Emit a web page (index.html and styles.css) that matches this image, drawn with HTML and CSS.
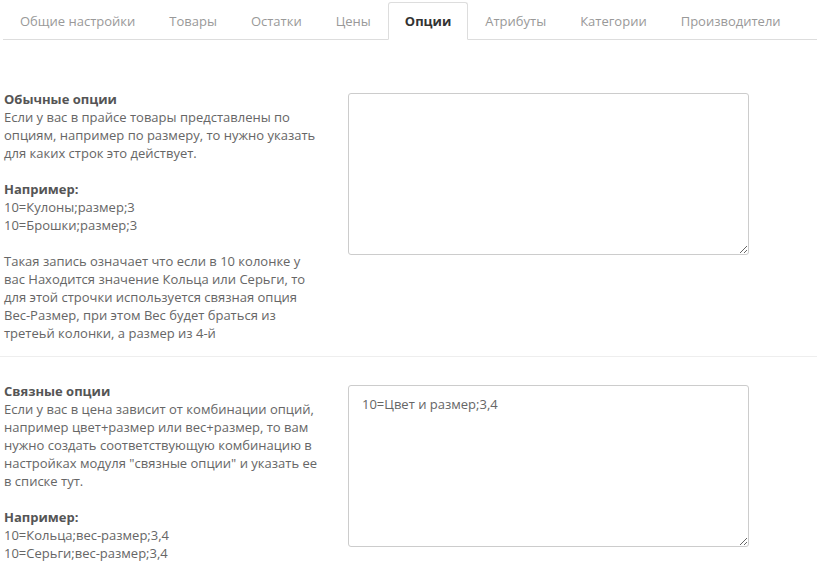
FILE: index.html
```html
<!DOCTYPE html>
<html lang="ru">
<head>
    <meta charset="UTF-8">
    <title>Опции</title>
    <link rel="stylesheet" href="styles.css">
</head>
<body>
    <div class="page">
        <ul class="nav-tabs">
            <li><a href="#">Общие настройки</a></li>
            <li><a href="#">Товары</a></li>
            <li><a href="#">Остатки</a></li>
            <li><a href="#">Цены</a></li>
            <li class="active"><a href="#">Опции</a></li>
            <li><a href="#">Атрибуты</a></li>
            <li><a href="#">Категории</a></li>
            <li><a href="#">Производители</a></li>
        </ul>

        <div class="tab-content">
            <div class="form-group">
                <div class="help">
                    <b>Обычные опции</b><br>
                    Если у вас в прайсе товары представлены по опциям, например по размеру, то нужно указать для каких строк это действует.<br>
                    <br>
                    <b>Например:</b><br>
                    10=Кулоны;размер;3<br>
                    10=Брошки;размер;3<br>
                    <br>
                    Такая запись означает что если в 10 колонке у вас Находится значение Кольца или Серьги, то для этой строчки используется связная опция Вес-Размер, при этом Вес будет браться из третеьй колонки, а размер из 4-й
                </div>
                <div class="field">
                    <textarea class="form-control"></textarea>
                </div>
            </div>

            <div class="form-group">
                <div class="help">
                    <b>Связные опции</b><br>
                    Если у вас в цена зависит от комбинации опций, например цвет+размер или вес+размер, то вам нужно создать соответствующую комбинацию в настройках модуля "связные опции" и указать ее в списке тут.<br>
                    <br>
                    <b>Например:</b><br>
                    10=Кольца;вес-размер;3,4<br>
                    10=Серьги;вес-размер;3,4
                </div>
                <div class="field">
                    <textarea class="form-control">10=Цвет и размер;3,4</textarea>
                </div>
            </div>
        </div>
    </div>
</body>
</html>
```

FILE: styles.css
```css
body {
    margin: 0;
    font-family: 'Open Sans', 'Noto Sans', sans-serif;
    font-size: 13px;
    line-height: 18px;
    color: #666;
    background: #fff;
}
.page {
    padding: 2px 0 0 3px;
}
.nav-tabs {
    display: flex;
    list-style: none;
    margin: 0;
    padding: 0;
    border-bottom: 1px solid #ddd;
}
.nav-tabs li {
    margin-right: 0;
    margin-bottom: -1px;
}
.nav-tabs a {
    display: block;
    padding: 9px 16px;
    color: #999;
    white-space: nowrap;
    text-decoration: none;
    border: 1px solid transparent;
    border-radius: 3px 3px 0 0;
}
.nav-tabs .active a {
    color: #333;
    font-weight: bold;
    border-color: #ddd;
    border-bottom-color: #fff;
    background: #fff;
}
.tab-content {
    padding-top: 25px;
    margin-left: -3px;
}
.form-group {
    display: flex;
    padding: 25px 0 14px 4px;
    border-bottom: 1px solid #eee;
}
.form-group:last-child {
    border-bottom: none;
}
.help {
    width: 318px;
    flex: none;
}
.help b {
    color: #555;
}
.field {
    padding: 3px 0 0 26px;
}
.form-control {
    display: block;
    box-sizing: border-box;
    width: 401px;
    height: 162px;
    padding: 9px 13px;
    font-family: inherit;
    font-size: 13px;
    line-height: 18px;
    color: #666;
    border: 1px solid #ccc;
    border-radius: 3px;
    resize: vertical;
}
```
